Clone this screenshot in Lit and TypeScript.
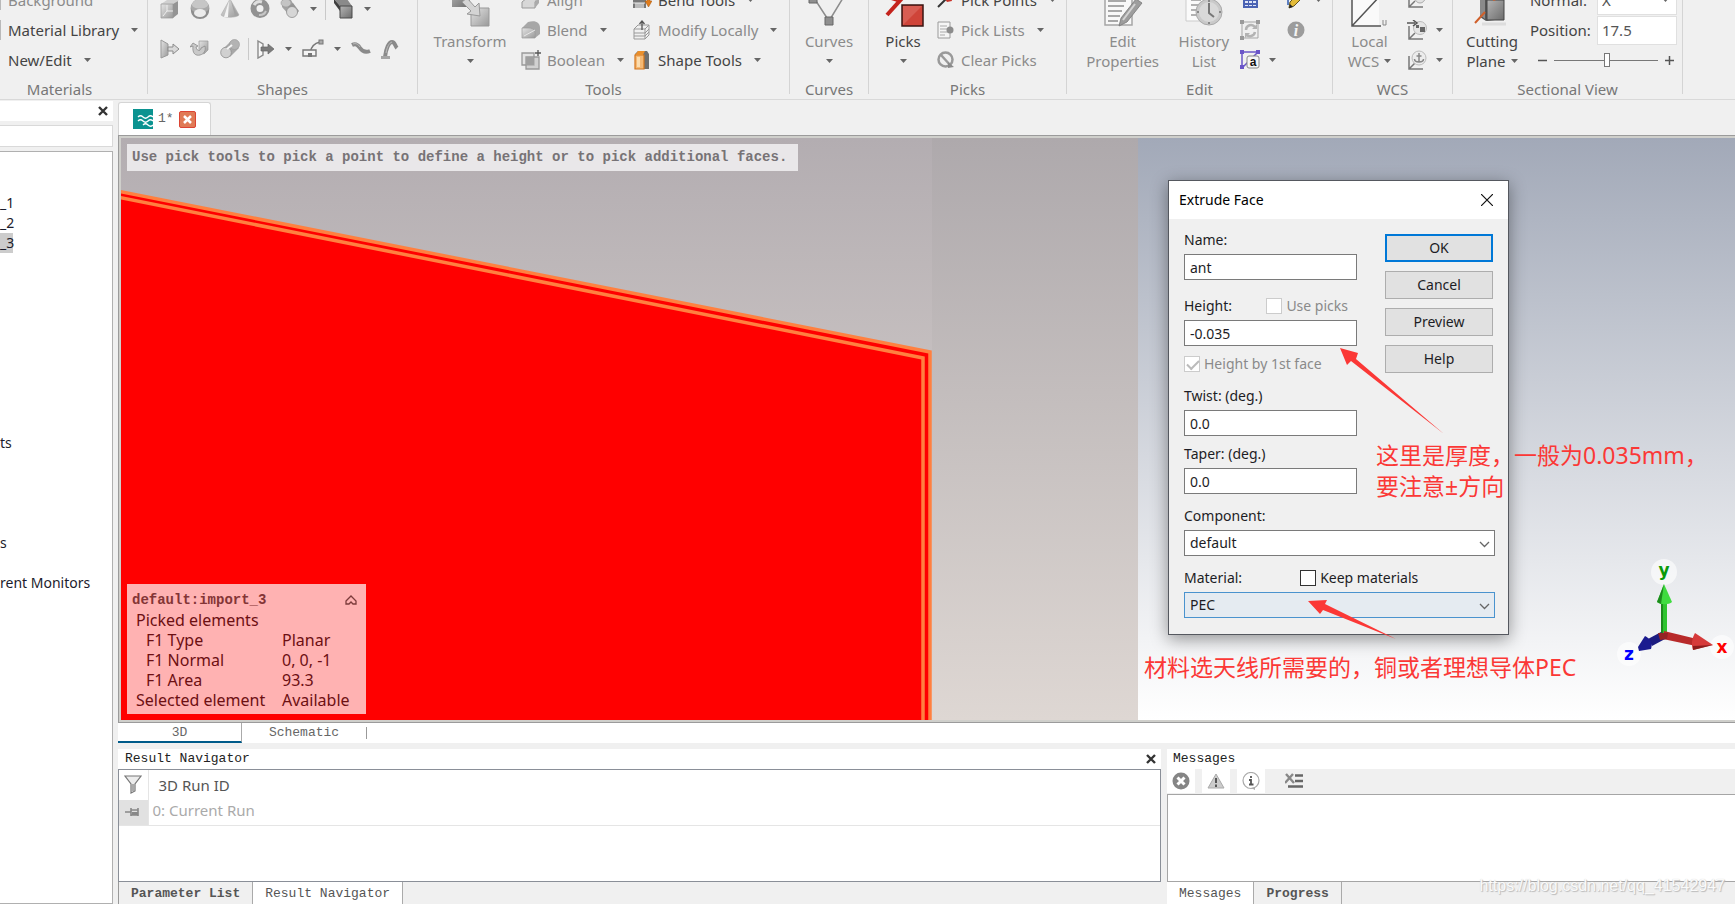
import { LitElement, html, svg, css, nothing } from "lit";
import { customElement, property } from "lit/decorators.js";
import { classMap } from "lit/directives/class-map.js";

const caret = html`<svg class="caret" width="7" height="4" viewBox="0 0 7 4"><path d="M0 0h7L3.500 4z" fill="#666" /></svg>`;

const glyphs: Record<string, { w: number; h: number; d: unknown }> = {
  sliverGrey: { w: 3, h: 20, d: svg`<path d="M0 0h2v20H0z" fill="#b9b9b9"/>` },
  sliverRed: { w: 3, h: 20, d: svg`<ellipse cx="-2" cy="10" rx="3" ry="6" fill="#e3a9a4"/>` },
  cube: { w: 20, h: 20, d: svg`<path d="M1 5l6-4h12l-5 4z" fill="#d0d0d0"/><path d="M1 5h12v14H1z" fill="url(#gA)" stroke="#999" stroke-width=".7"/><path d="M13 5l5-3v13l-5 4z" fill="#949494"/><path d="M3 17l4-5v-6M7 12h6" stroke="#eee" fill="none"/>` },
  sphere: { w: 20, h: 20, d: svg`<circle cx="10" cy="9.500" r="9.500" fill="#a9a9a9"/><path d="M1 9a9 5 0 0 0 18 0v3a9 8 0 0 1-18 0z" fill="#8e8e8e"/><path d="M2 5a9 9 0 0 1 16 0c1 6-17 6-16 0z" fill="#c6c6c6"/><ellipse cx="10" cy="14" rx="6" ry="4" fill="#ececec"/>` },
  cone: { w: 20, h: 20, d: svg`<path d="M10 0l9 16c-3 3-15 3-18 0z" fill="url(#gA)" stroke="#aaa" stroke-width=".6"/><path d="M9 2l-1 16H4z" fill="#f4f4f4"/><path d="M11 2l4 15h3z" fill="#a2a2a2"/>` },
  torus: { w: 20, h: 20, d: svg`<circle cx="10" cy="9.500" r="6.500" fill="none" stroke="#929292" stroke-width="6"/><path d="M4 6a7 7 0 0 1 8-3" stroke="#dedede" stroke-width="3" fill="none"/><path d="M16 12a7 7 0 0 1-7 4" stroke="#c6c6c6" stroke-width="2" fill="none"/>` },
  cyls: { w: 20, h: 20, d: svg`<path d="M2 1h9l5 9-6 7L2 8z" fill="#a3a3a3"/><ellipse cx="6" cy="4" rx="5" ry="4" fill="#c4c4c4" stroke="#999" stroke-width=".6"/><path d="M8 8l5-4 6 8-5 6z" fill="#959595"/><circle cx="12" cy="13" r="5.500" fill="#d6d6d6" stroke="#8f8f8f" stroke-width=".8"/>` },
  extrudeDark: { w: 20, h: 20, d: svg`<path d="M0 0h13l5 7H6z" fill="#8a8a8a"/><path d="M0 0l6 7v5L0 4z" fill="#3f3f3f"/><path d="M6 7h12v12H6z" fill="url(#gB)" stroke="#4a4a4a"/>` },
  rotFace: { w: 20, h: 20, d: svg`<path d="M1 1l7 4v11l-7 3z" fill="url(#gA)" stroke="#999"/><path d="M8 8h5V5l6 5-6 5v-3H8z" fill="#d9d9d9" stroke="#8b8b8b"/>` },
  rotate: { w: 20, h: 20, d: svg`<path d="M9 2h9v9l-4 4-5-3z" fill="url(#gA)" stroke="#999" stroke-width=".7"/><path d="M3 7c-1 8 3 10 7 9 4-1 6-4 5-9l-4 2c0 3-4 4-5-1l2-1-5-3-3 4z" fill="#c9c9c9" stroke="#8c8c8c" stroke-width=".8"/>` },
  loft: { w: 20, h: 20, d: svg`<path d="M2 11l9-9 8 7-9 9z" fill="#a8a8a8"/><circle cx="14.500" cy="5.500" r="5" fill="#b3b3b3" stroke="#999" stroke-width=".6"/><circle cx="6" cy="13.500" r="5.300" fill="#d0d0d0" stroke="#8e8e8e" stroke-width=".8"/><path d="M7 10l5-4" stroke="#f5f5f5" stroke-width="2"/>` },
  extrudeCurve: { w: 18, h: 20, d: svg`<path d="M1 2l5 3v11l-5 3z" fill="#f7f7f7" stroke="#8a8a8a" stroke-width="1.400"/><path d="M4 8h7V5l6 5-6 5v-3H4z" fill="#7b7b7b" stroke="#666" stroke-width=".7"/>` },
  sweep: { w: 22, h: 20, d: svg`<path d="M8 14C9 7 13 4 18 3" fill="none" stroke="#777" stroke-width="1.400"/><path d="M1 11h13v6H1z" fill="#f4f4f4" stroke="#777" stroke-width="1.400"/><path d="M6 14h4v4H6z" fill="#777"/><rect x="17" y="1" width="4" height="4" fill="#aaa" stroke="#777"/>` },
  wave: { w: 20, h: 20, d: svg`<path d="M1 6c4-2 6 0 8 3s5 5 10 3" fill="none" stroke="#8a8a8a" stroke-width="4"/><path d="M2 5c3-1 5 0 7 3" fill="none" stroke="#b9b9b9" stroke-width="1"/>` },
  wire: { w: 18, h: 20, d: svg`<path d="M4 18C5 9 8 3 11 3s3 4 5 6" fill="none" stroke="#8a8a8a" stroke-width="4"/><path d="M0 17h9v3H0z" fill="#a5a5a5"/><path d="M5 14C6 8 8 4 11 3" fill="none" stroke="#bcbcbc"/>` },
  transform: { w: 40, h: 40, d: svg`<path d="M2 3h18v17H2z" fill="url(#gB)"/><path d="M21 21h18v18H21z" fill="url(#gA)" stroke="#999"/><path d="M12 15l5-4 8 9 4-4 1 13-13-2 4-3z" fill="#d4d4d4" stroke="#999"/>` },
  align: { w: 20, h: 20, d: svg`<path d="M5 6l4-4h8l-2 6H4z" fill="#ddd" stroke="#999"/><path d="M1 12l5-4h11l-3 4v6H1z" fill="#d7d7d7" stroke="#999"/><path d="M14 12l4-4v5l-4 5z" fill="#aaa"/>` },
  blend: { w: 20, h: 20, d: svg`<path d="M1 8l6-6c7-2 12 0 12 6v6l-5 4H1z" fill="#a7a7a7"/><path d="M1 8h7c5 0 7 3 6 10H1z" fill="url(#gA)" stroke="#999" stroke-width=".7"/><path d="M3 16l11-6" stroke="#e7e7e7"/>` },
  boolean: { w: 20, h: 20, d: svg`<path d="M1 3h12v12H1z" fill="#e3e3e3" stroke="#999" stroke-width="1.300"/><path d="M5 7h13v12H5z" fill="#bdbdbd" fill-opacity=".6" stroke="#999" stroke-width="1.300"/><path d="M5 7h8v8H5z" fill="#9f9f9f"/><path d="M14 3h6M17 0v6" stroke="#555" stroke-width="1.300"/>` },
  bend: { w: 20, h: 20, d: svg`<path d="M1 8c1-6 11-8 13 0v10H1z" fill="#777"/><path d="M3 13h9v5H3z" fill="#bbb"/><path d="M1 13h12" stroke="#eee"/><path d="M15 4h3v7h2l-3.500 6L13 11h2z" fill="#e07b1a" stroke="#a85a10" stroke-width=".5"/>` },
  modify: { w: 20, h: 20, d: svg`<path d="M2 9l4-4h11v10l-4 4H2z" fill="#f0f0f0" stroke="#999"/><path d="M2 9h11v10M13 9l4-4M2 13h11l4-4M2 16h11l4-4" fill="none" stroke="#999"/><path d="M10 10V1M7.500 4L10 1l2.500 3" fill="none" stroke="#555" stroke-width="1.300"/>` },
  shape: { w: 20, h: 20, d: svg`<path d="M3 4l3-3h9l2 3v15H3z" fill="#6f6f6f"/><path d="M3 5h9v14H3z" fill="#f5b873" stroke="#d2741c" stroke-width="1.200"/><path d="M3 5l3-4h7l-2 4z" fill="#ea8f2c"/><path d="M5 7h3v10H5z" fill="#fbdcae"/>` },
  curves: { w: 44, h: 40, d: svg`<path d="M7 11l15 23L36 11" fill="none" stroke="#8c8c8c" stroke-width="1.500"/><path d="M2 8h8v8H2zM18 30h8v8h-8zM33 6h6v6h-6z" fill="#8f8f8f" stroke="#666"/>` },
  picks: { w: 44, h: 40, d: svg`<path d="M6 28L24 8" stroke="#c4231c" stroke-width="4"/><path d="M7 10l10 3" stroke="#c4231c" stroke-width="4"/><path d="M21 18h21v21H21z" fill="#cf4439" stroke="#3a1512" stroke-width="1.500"/><path d="M22 19h19L22 38z" fill="#d85d53"/>` },
  pickPoint: { w: 18, h: 20, d: svg`<path d="M1 17L9 9" stroke="#333" stroke-width="2"/><path d="M6 6l7-4 2 9-5 1z" fill="#c9342b"/>` },
  pickList: { w: 18, h: 20, d: svg`<path d="M1 2h12v16H1z" fill="#f5f5f5" stroke="#9a9a9a"/><path d="M3 6h7M3 9h7M3 12h7M3 15h5" stroke="#a9a9a9"/><circle cx="13" cy="10" r="3.500" fill="#8c8c8c"/>` },
  clear: { w: 18, h: 20, d: svg`<circle cx="8.500" cy="9.500" r="7" fill="none" stroke="#9a9a9a" stroke-width="2.500"/><path d="M4 5l10 11" stroke="#9a9a9a" stroke-width="2.500"/><path d="M11 12l6 5-6 1z" fill="#8b8b8b"/>` },
  editProps: { w: 40, h: 40, d: svg`<path d="M2 2h27v36H2z" fill="#f8f8f8" stroke="#a5a5a5" stroke-width="1.500"/><path d="M5 14h18M5 19h16M5 24h14M5 29h12M5 34h10" stroke="#8d8d8d" stroke-width="1.500"/><path d="M33 12l6 4-15 19-8 4 2-8z" fill="#9d9d9d" stroke="#777" stroke-width=".8"/><path d="M32 17L20 33" stroke="#d3d3d3" stroke-width="2"/>` },
  history: { w: 40, h: 40, d: svg`<path d="M2 2h26v32H2z" fill="#fafafa" stroke="#ccc"/><path d="M7 13h10M7 18h8M7 23h6M7 28h6" stroke="#999" stroke-width="1.500"/><circle cx="25" cy="25" r="13" fill="#c9c9c9" stroke="#aaa"/><circle cx="25" cy="25" r="10" fill="#d9d9d9"/><path d="M25 16v10l5 4" fill="none" stroke="#777" stroke-width="2"/><path d="M25 13v2M25 35v2M13 25h2M35 25h2" stroke="#888" stroke-width="2"/>` },
  calc: { w: 20, h: 20, d: svg`<path d="M3 1h15v17H3z" fill="#4a62b3"/><path d="M5 7h3v2H5zM9 7h3v2H9zM13 7h3v2h-3zM5 11h3v2H5zM9 11h3v2H9zM13 11h3v2h-3zM5 15h3v1H5zM9 15h3v1H9zM13 15h3v1h-3z" fill="#dfe5f7"/>` },
  refresh: { w: 20, h: 20, d: svg`<path d="M2 2h16v16H2z" fill="none" stroke="#a5a5a5"/><path d="M0 0h4v4H0zM16 0h4v4h-4zM0 16h4v4H0z" fill="#9a9a9a"/><path d="M6 10a5 5 0 0 1 9-3M15 12a5 5 0 0 1-9 2" fill="none" stroke="#b3b3b3" stroke-width="2.500"/><path d="M17 4v5h-5zM5 18v-5h5z" fill="#b3b3b3"/>` },
  param: { w: 20, h: 20, d: svg`<path d="M2 18V2h16L3 17" fill="none" stroke="#6a55c8" stroke-width="1.500"/><path d="M0 0h4v4H0zM16 0h4v4h-4zM0 15h4v4H0z" fill="#6a55c8"/><rect x="7" y="6" width="12" height="12" rx="2" fill="#f5f5f5" stroke="#888"/><text x="13" y="16" text-anchor="middle" font-family="Liberation Sans" font-weight="700" font-size="12" fill="#111">a</text>` },
  pencil: { w: 20, h: 20, d: svg`<path d="M2 3h4M2 15V4" stroke="#5d7fc0" stroke-width="2"/><path d="M15 1l4 4-11 11-5 2 1-6z" fill="#e3bb37" stroke="#5f5320"/><path d="M3 18l1-4 3 3z" fill="#222"/>` },
  info: { w: 20, h: 20, d: svg`<circle cx="10" cy="10" r="8.500" fill="#9c9c9c"/><text x="10" y="16" text-anchor="middle" font-family="Liberation Serif" font-style="italic" font-weight="700" font-size="16" fill="#f3f3f3">i</text>` },
  wcs: { w: 40, h: 40, d: svg`<path d="M3 5h27v33H3z" fill="#fafafa"/><path d="M3 4v35h29M3 39L31 9" fill="none" stroke="#555" stroke-width="1.500"/><path d="M34 33v5h3v-5" fill="none" stroke="#888"/>` },
  wcsA: { w: 20, h: 20, d: svg`<path d="M2 2v15h14M2 17l6-6" fill="none" stroke="#777" stroke-width="1.500"/><circle cx="13" cy="8" r="5" fill="#e2e2e2" stroke="#aaa"/><path d="M10 9h6" stroke="#777" stroke-width="2"/>` },
  wcsB: { w: 20, h: 20, d: svg`<path d="M2 6v13h14M2 19l6-6" fill="none" stroke="#777" stroke-width="1.500"/><circle cx="13" cy="8" r="6.500" fill="#e5e5e5" stroke="#bbb"/><path d="M0 3h8M6 0l4 3-4 3" fill="none" stroke="#555" stroke-width="1.500"/><path d="M13 7h5v5h-5zM9 5h3v3H9z" fill="#666"/>` },
  wcsC: { w: 20, h: 20, d: svg`<path d="M2 6v13h14M2 19l6-6" fill="none" stroke="#777" stroke-width="1.500"/><circle cx="12" cy="8" r="7" fill="#ececec" stroke="#bbb"/><path d="M12 3v9M9.500 6h5M7.500 9c0 4 9 4 9 0" fill="none" stroke="#888" stroke-width="1.500"/>` },
  cutting: { w: 36, h: 40, d: svg`<path d="M6 4h24v28l-18 2-6-4z" fill="#555"/><path d="M6 6l5 4v22l-5-4z" fill="#8a8a8a"/><path d="M13 13h17v20H13z" fill="url(#gB)" stroke="#444"/><path d="M1 36l10-11M19 13l9-3" stroke="#d0602b" stroke-width="2"/><path d="M8 37h24" stroke="#ddd" stroke-width="3"/>` },
  logo: { w: 20, h: 20, d: svg`<path d="M0 0h20v20H0z" fill="#0b9390"/><path d="M5 8q2.500-2.500 5 0t5 0 5 0M5 12q2.500-2.500 5 0t5 0 5 0M10 16q2.500-2.500 5 0t5 0" fill="none" stroke="#fff" stroke-width="1.300"/>` },
  closeX: { w: 10, h: 10, d: svg`<path d="M1 1l8 8M9 1L1 9" stroke="#333" stroke-width="2.400"/>` },
  closeWhite: { w: 9, h: 9, d: svg`<path d="M1 1l7 7M8 1L1 8" stroke="#fff" stroke-width="2.500"/>` },
  closeThin: { w: 12, h: 12, d: svg`<path d="M0 0l12 12M12 0L0 12" stroke="#111" stroke-width="1.200"/>` },
  funnel: { w: 18, h: 20, d: svg`<path d="M1 1h16l-6 8v7l-4 2V9z" fill="#ececec" stroke="#777" stroke-width="1.200"/><path d="M9 9v7" stroke="#aaa" stroke-width="2"/>` },
  pin: { w: 16, h: 12, d: svg`<path d="M0 6h6M6 2v8M6 4h7M6 9h7M13 2v8" fill="none" stroke="#888" stroke-width="1.600"/><path d="M7 6h6v3H7z" fill="#888"/>` },
  chevUp: { w: 12, h: 10, d: svg`<path d="M1 6l5-5 5 5v3H8L6 7 4 9H1z" fill="none" stroke="#7c3b3b" stroke-width="1.300"/>` },
  error: { w: 18, h: 18, d: svg`<circle cx="9" cy="9" r="8.500" fill="#858585"/><path d="M5.500 5.500l7 7M12.500 5.500l-7 7" stroke="#fff" stroke-width="3"/>` },
  warn: { w: 18, h: 18, d: svg`<path d="M9 2l8 14H1z" fill="#ccc" stroke="#aaa"/><path d="M9 6v5M9 12.500V15" stroke="#555" stroke-width="2"/>` },
  note: { w: 18, h: 18, d: svg`<circle cx="9" cy="8.500" r="8" fill="#fff" stroke="#aaa" stroke-width="1.200"/><path d="M9 4v2M7 8h2v4M7 12.500h4.500" fill="none" stroke="#555" stroke-width="1.800"/><path d="M9 16l4 2v-3z" fill="#aaa"/>` },
  clearList: { w: 18, h: 16, d: svg`<path d="M1 1l8 9M8 1L0 10" stroke="#888" stroke-width="2.400"/><path d="M10 2.500h8M10 8h8M3 13.500h15" stroke="#666" stroke-width="2.600"/>` },
};

const icon = (name: string) => {
  const g = glyphs[name];
  return html`<svg class="ic" width=${g.w} height=${g.h} viewBox="0 0 ${g.w} ${g.h}" aria-hidden="true">
    <defs>
      <linearGradient id="gA" x1="0" y1="0" x2="1" y2="1"><stop offset="0" stop-color="#e4e4e4" /><stop offset="1" stop-color="#999" /></linearGradient>
      <linearGradient id="gB" x1="0" y1="0" x2="1" y2="1"><stop offset="0" stop-color="#b5b5b5" /><stop offset="1" stop-color="#6c6c6c" /></linearGradient>
    </defs>
    ${g.d}
  </svg>`;
};

const resets = css`
  * { box-sizing: border-box; }
  button { font: inherit; color: inherit; background: none; border: 0; padding: 0; margin: 0; }
  svg { display: block; flex: none; }
`;

@customElement("cst-ribbon")
class CstRibbon extends LitElement {
  static styles = [resets, css`
    :host { display: flex; height: 100px; padding-bottom: 5px; border-bottom: 1px solid #d9d9d9; background: #f0f0f0; overflow: hidden; font: 15px/20px "Noto Sans", sans-serif; color: #444; }
    .group { flex: none; display: flex; flex-direction: column; justify-content: flex-end; border-right: 1px solid #d4d4d4; }
    .body { display: flex; height: 90px; flex: none; margin-bottom: 5px; }
    .label { height: 14px; flex: none; line-height: 18px; text-align: center; color: #777; }
    .col { display: flex; flex-direction: column; }
    .item { display: flex; align-items: center; height: 30px; gap: 6px; white-space: nowrap; }
    .item .caret { margin-left: 6px; }
    .off { color: #8b8b8b; }
    .big { display: flex; flex-direction: column; align-items: center; justify-content: flex-end; height: 86px; line-height: 20px; }
    .big .ic { margin-bottom: 4px; }
    .line { height: 20px; display: flex; align-items: center; gap: 5px; }
    .strip { display: flex; align-items: center; height: 40px; gap: 10px; }
    .bar { width: 1px; height: 22px; margin: 0 -2px; background: #c9c9c9; }
    .materials { width: 176px; margin-left: -28px; }
    .materials .body { padding-left: 27px; }
    .shapes { width: 270px; }
    .shapes .body { flex-direction: column; padding: 4px 0 6px 12px; }
    .tools { width: 372px; }
    .tools .body { padding-left: 15px; }
    .tools .big { width: 74px; margin-right: 14px; }
    .tools .col { width: 111px; }
    .curves { width: 79px; }
    .curves .body, .wcs .body { justify-content: center; }
    .picks { width: 198px; }
    .picks .body { padding-left: 12px; gap: 12px; }
    .edit { width: 266px; }
    .edit .body { padding-left: 19px; }
    .edit .big { width: 80px; }
    .edit .big + .big { margin-left: 8px; }
    .edit .col { width: 50px; }
    .edit .item .caret { margin-left: 3px; }
    .wcs { width: 120px; }
    .wcs .body { gap: 16px; padding-left: 6px; }
    .wcs .item .caret { margin-left: 3px; }
    .section { width: 230px; }
    .section .body { padding-left: 13px; gap: 12px; }
    .section .item { width: 147px; justify-content: space-between; gap: 4px; }
    .box { width: 80px; height: 29px; border: 1px solid #e0e0e0; background: #fff; padding: 0 4px; font: inherit; color: #555; appearance: none; border-radius: 0; outline: 0; }
    .pick { position: relative; display: flex; }
    .pick .caret { position: absolute; right: 8px; top: 12px; }
    .slide { padding: 0 3px 0 8px; }
    input[type="range"] { appearance: none; width: 104px; height: 14px; margin: 0; background: linear-gradient(#777, #777) center / 100% 1px no-repeat; }
    input[type="range"]::-webkit-slider-thumb { appearance: none; width: 6px; height: 14px; background: #fff; border: 1px solid #777; border-radius: 0; }
    .step { width: 9px; height: 20px; display: grid; place-items: center; }
  `];

  item(ic: string, text = "", off = true, drop = true) {
    return html`<button class=${classMap({ item: true, off })}>${icon(ic)}${text ? html`<span>${text}</span>` : nothing}${drop ? caret : nothing}</button>`;
  }
  big(ic: string, first: string, second = "", off = true, drop = true) {
    return html`<button class=${classMap({ big: true, off })}>${icon(ic)}<span class="line">${first}</span><span class="line">${second}${drop ? caret : nothing}</span></button>`;
  }
  group(name: string, label: string, body: unknown) {
    return html`<section class="group ${name}"><div class="body">${body}</div><div class="label">${label}</div></section>`;
  }
  tool(ic: string) {
    return html`<button aria-label=${ic}>${icon(ic)}</button>`;
  }

  render() {
    const bar = html`<span class="bar"></span>`;
    return html`
      ${this.group("materials", "Materials", html`<div class="col">
        ${this.item("sliverGrey", "Background", true, false)}${this.item("sliverGrey", "Material Library", false)}${this.item("sliverRed", "New/Edit", false)}</div>`)}
      ${this.group("shapes", "Shapes", html`
        <div class="strip">${["cube", "sphere", "cone", "torus", "cyls"].map((n) => this.tool(n))}${caret}${bar}${this.tool("extrudeDark")}${caret}</div>
        <div class="strip">${["rotFace", "rotate", "loft"].map((n) => this.tool(n))}${bar}${this.tool("extrudeCurve")}${caret}${this.tool("sweep")}${caret}${this.tool("wave")}${this.tool("wire")}</div>`)}
      ${this.group("tools", "Tools", html`${this.big("transform", "Transform")}
        <div class="col">${this.item("align", "Align", true, false)}${this.item("blend", "Blend")}${this.item("boolean", "Boolean")}</div>
        <div class="col">${this.item("bend", "Bend Tools", false)}${this.item("modify", "Modify Locally")}${this.item("shape", "Shape Tools", false)}</div>`)}
      ${this.group("curves", "Curves", this.big("curves", "Curves"))}
      ${this.group("picks", "Picks", html`${this.big("picks", "Picks", "", false)}
        <div class="col">${this.item("pickPoint", "Pick Points", false)}${this.item("pickList", "Pick Lists")}${this.item("clear", "Clear Picks", true, false)}</div>`)}
      ${this.group("edit", "Edit", html`${this.big("editProps", "Edit", "Properties", true, false)}${this.big("history", "History", "List", true, false)}
        <div class="col">${this.item("calc", "", true, false)}${this.item("refresh", "", true, false)}${this.item("param")}</div>
        <div class="col">${this.item("pencil")}${this.item("info", "", true, false)}</div>`)}
      ${this.group("wcs", "WCS", html`${this.big("wcs", "Local", "WCS")}
        <div class="col">${this.item("wcsA", "", true, false)}${this.item("wcsB")}${this.item("wcsC")}</div>`)}
      ${this.group("section", "Sectional View", html`${this.big("cutting", "Cutting", "Plane", false)}
        <div class="col">
          <div class="item"><label for="normal">Normal:</label><span class="pick"><select id="normal" class="box"><option>X</option></select>${caret}</span></div>
          <div class="item"><label for="position">Position:</label><input id="position" class="box" value="17.5" /></div>
          <div class="item slide"><button class="step" aria-label="Decrease"><svg width="9" height="9"><path d="M0 4.500h9" stroke="#555" stroke-width="1.500" /></svg></button>
            <input type="range" aria-label="Position" min="0" max="100" value="51" />
            <button class="step" aria-label="Increase"><svg width="9" height="9"><path d="M0 4.500h9M4.500 0v9" stroke="#555" stroke-width="1.500" /></svg></button></div>
        </div>`)}
    `;
  }
}

@customElement("cst-tree")
class CstTree extends LitElement {
  static styles = [resets, css`
    :host { display: flex; flex-direction: column; background: #f0f0f0; font: 14px/20px "Noto Sans", sans-serif; color: #1c1c2c; }
    .title { height: 20px; margin-top: 1px; background: #fff; display: flex; align-items: center; justify-content: flex-end; padding-right: 5px; }
    .search { height: 22px; margin: 4px 0; border: 1px solid #d9d9d9; border-left: 0; width: 100%; background: #fff; outline: 0; }
    ul { flex: 1; margin: 0; padding: 1px 0 0; list-style: none; background: #fff; border: 1px solid #b0b0b0; border-left: 0; }
    li { height: 20px; white-space: nowrap; }
    .sel { background: #ccc; width: 13px; }
  `];
  render() {
    const rows: Record<number, string> = { 2: "_1", 3: "_2", 4: "_3", 14: "ts", 19: "s", 21: "rent Monitors" };
    return html`<div class="title"><button aria-label="Close">${icon("closeX")}</button></div>
      <input class="search" aria-label="Search" />
      <ul>${Array.from({ length: 22 }, (_, i) => html`<li class=${classMap({ sel: i === 4 })}>${rows[i] ?? nothing}</li>`)}</ul>`;
  }
}

@customElement("extrude-dialog")
class ExtrudeDialog extends LitElement {
  static styles = [resets, css`
    :host { display: block; width: 341px; background: #f0f0f0; border: 1px solid #55585f; box-shadow: 0 4px 16px rgba(0, 0, 0, 0.4); font: 14px/20px "Noto Sans", sans-serif; color: #1d1d25; }
    header { height: 38px; background: #fff; display: flex; align-items: center; justify-content: space-between; padding: 0 15px 0 10px; color: #000; }
    form { display: grid; grid-template-columns: 173px 108px; column-gap: 28px; padding: 11px 13px 16px 15px; }
    .field { display: flex; flex-direction: column; gap: 4px; }
    .near { margin-top: 8px; }
    .mid { margin-top: 12px; }
    .far { margin-top: 16px; }
    .wide { grid-column: 1 / -1; margin-right: -2px; }
    .cap { display: flex; }
    .cap .check { margin-left: auto; }
    .cap.keep { gap: 58px; }
    .cap.keep .check { margin-left: 0; }
    .text, select { font: inherit; color: inherit; height: 26px; width: 100%; border: 1px solid #7a7a7a; background: #fff; padding: 0 5px; outline: 0; border-radius: 0; appearance: none; }
    .check { display: flex; align-items: center; gap: 4px; }
    .check input { appearance: none; width: 16px; height: 16px; margin: 0; border: 1px solid #333; background: #fff; }
    .dim { color: #8a8a8a; padding-right: 9px; }
    .dim input { border-color: #ccc; }
    .check input:checked { position: relative; }
    .check input:checked::after { content: ""; position: absolute; left: 2px; top: 3px; width: 10px; height: 5px; border: solid #bbb; border-width: 0 0 2px 2px; rotate: -45deg; }
    .combo { position: relative; }
    .combo svg { position: absolute; right: 5px; top: 11px; }
    .hot select { background: #e5ebf1; border-color: #4a93ce; }
    .buttons { display: flex; flex-direction: column; gap: 9px; padding-top: 4px; }
    .push { height: 28px; background: #e1e1e1; border: 1px solid #adadad; }
    .ok { border: 2px solid #0078d7; }
  `];
  field(id: string, label: string, value: string, cls = "", extra: unknown = nothing) {
    return html`<div class="field ${cls}"><div class="cap"><label for=${id}>${label}</label>${extra}</div><input class="text" id=${id} .value=${value} /></div>`;
  }
  combo(id: string, value: string) {
    return html`<select id=${id}><option>${value}</option></select>
      <svg width="11" height="7"><path d="M1 1l4.500 4.500L10 1" fill="none" stroke="#666" stroke-width="1.300" /></svg>`;
  }
  render() {
    return html`<header><span>Extrude Face</span><button aria-label="Close">${icon("closeThin")}</button></header>
      <form @submit=${(e: Event) => e.preventDefault()}>
        <div>
          ${this.field("name", "Name:", "ant")}
          ${this.field("height", "Height:", "-0.035", "far", html`<label class="check dim"><input type="checkbox" disabled />Use picks</label>`)}
          <label class="check dim near"><input type="checkbox" checked disabled />Height by 1st face</label>
          ${this.field("twist", "Twist: (deg.)", "0.0", "mid")}
          ${this.field("taper", "Taper: (deg.)", "0.0", "near")}
        </div>
        <div class="buttons">
          <button class="push ok">OK</button><button class="push" type="button">Cancel</button>
          <button class="push" type="button">Preview</button><button class="push" type="button">Help</button>
        </div>
        <div class="field wide mid"><label for="component">Component:</label><div class="combo">${this.combo("component", "default")}</div></div>
        <div class="field wide mid"><div class="cap keep"><label for="material">Material:</label><label class="check"><input type="checkbox" />Keep materials</label></div>
          <div class="combo hot">${this.combo("material", "PEC")}</div></div>
      </form>`;
  }
}

@customElement("cst-viewport")
class CstViewport extends LitElement {
  static styles = [resets, css`
    :host { display: block; position: relative; border: solid #9b9b9b; border-width: 1px 0 1px 1px; background: #cfcfcb; font-family: "Noto Sans", sans-serif; }
    .scene { position: absolute; inset: 2px 0 2px 2px; width: calc(100% - 2px); height: calc(100% - 4px); }
    .hint, .info, .axes, .arrows, .note, extrude-dialog { position: absolute; }
    .hint { left: 8px; top: 8px; padding: 0 11px 0 5px; font: bold 14px/27px "Liberation Mono", monospace; color: #777376; background: #e9e7e9; white-space: nowrap; }
    .info { left: 8px; bottom: 8px; width: 239px; padding: 5px 5px 4px; background: #ffb2b2; color: #6d0f12; font-size: 16px; line-height: 20px; }
    .head { display: flex; justify-content: space-between; align-items: center; padding-right: 4px; height: 21px; font: bold 14px/20px "Liberation Mono", monospace; color: #843536; }
    dl { display: grid; grid-template-columns: 146px 1fr; margin: 0; padding-left: 4px; }
    dt.in { padding-left: 10px; }
    dd { margin: 0; white-space: nowrap; }
    dt { white-space: nowrap; }
    .axes { right: 0; bottom: 52px; }
    extrude-dialog { left: 1049px; top: 44px; }
    .arrows { left: 1180px; top: 200px; }
    .note { font: 23px/31px "Noto Sans", "Noto Sans CJK SC", sans-serif; color: #fb3836; white-space: pre; }
    .one { left: 1257px; top: 304px; }
    .two { left: 1025px; top: 516px; }
  `];
  render() {
    return html`
      <svg class="scene">
        <defs>
          <linearGradient id="s" x1="0" y1="0" x2="0" y2="1"><stop offset="0" stop-color="#a2a9b8" /><stop offset="1" stop-color="#fff" /></linearGradient>
          <linearGradient id="a" x1="0" y1="0" x2="0" y2="1"><stop offset="0" stop-color="#b3adb1" /><stop offset="1" stop-color="#e2dbd6" /></linearGradient>
          <linearGradient id="b" x1="0" y1="0" x2="0" y2="1"><stop offset="0" stop-color="#aea9ac" /><stop offset="1" stop-color="#ded7d3" /></linearGradient>
        </defs>
        <rect width="100%" height="100%" fill="url(#s)" />
        <rect width="811" height="100%" fill="url(#a)" />
        <rect x="811" width="206" height="100%" fill="url(#b)" />
        <path d="M0 54L809 214V700H0z" fill="#f00" />
        <path d="M-4 53L809 214V700M-4 59L802 220V700" fill="none" stroke="#ff8040" stroke-width="3.500" />
      </svg>
      <div class="hint">Use pick tools to pick a point to define a height or to pick additional faces.</div>
      <div class="info">
        <div class="head">default:import_3 ${icon("chevUp")}</div>
        <dl><dt>Picked elements</dt><dd></dd><dt class="in">F1 Type</dt><dd>Planar</dd><dt class="in">F1 Normal</dt><dd>0, 0, -1</dd>
          <dt class="in">F1 Area</dt><dd>93.3</dd><dt>Selected element</dt><dd>Available</dd></dl>
      </div>
      <svg class="axes" width="120" height="120" viewBox="0 0 120 120" font-family="DejaVu Sans" font-weight="700" font-size="17" text-anchor="middle">
        <g fill="#fff" fill-opacity=".6"><circle cx="49" cy="22" r="13" /><circle cx="107" cy="97" r="12" /><circle cx="14" cy="104" r="12" /></g>
        <path d="M46 48h6v37h-6z" fill="#2fc52f" /><path d="M46 48h2v37h-2z" fill="#1d8a1d" /><path d="M49 34l8 18c-3 3-12 3-15 0z" fill="#3fdc3f" /><path d="M49 34l-7 18 4 2z" fill="#1d8a1d" />
        <path d="M49 81l33 8-1 7-33-7z" fill="#b82a2a" /><path d="M80 83l18 12-20 5c-2-5-1-12 2-17z" fill="#d63a3a" /><path d="M98 95l-20 5v-4z" fill="#8c1c1c" />
        <path d="M46 82l4 7-13 7-4-7z" fill="#1c1c80" /><path d="M30 86c5 2 8 8 6 13l-12 2-1-4z" fill="#1b1b8f" /><path d="M43 83l10 0-1 6-7 1z" fill="#952424" />
        <text x="49" y="26" fill="#0a9a0a">y</text><text x="107" y="103" fill="#f00">x</text><text x="14" y="110" fill="#00f">z</text>
      </svg>
      <extrude-dialog></extrude-dialog>
      <div class="note one">这里是厚度，一般为0.035mm，
要注意±方向</div>
      <div class="note two">材料选天线所需要的，铜或者理想导体PEC</div>
      <svg class="arrows" width="110" height="310" viewBox="1299 336 110 310" overflow="visible" fill="#fb3836">
        <path d="M1340 348l18 5-2 6 88 75-93-73-4 4z" /><path d="M1308 601l19-1-2 4 71 35-73-29-3 4z" />
      </svg>`;
  }
}

@customElement("cst-dock")
class CstDock extends LitElement {
  @property() kind = "results";
  static styles = [resets, css`
    :host { display: flex; flex-direction: column; min-width: 0; font: 13px/20px "Liberation Mono", monospace; color: #222; }
    .title { height: 20px; line-height: 22px; flex: none; background: #fff; display: flex; align-items: center; justify-content: space-between; padding: 0 5px 0 7px; }
    .title.msg { padding-left: 6px; }
    .pane { flex: 1; border: 1px solid #8a8f98; background: #fff; }
    .pane.msg { border: 1px solid #a5a5a5; border-right: 0; }
    table { width: 100%; border-collapse: collapse; font: 15px/20px "Noto Sans", sans-serif; color: #555; text-align: left; }
    th, td { padding: 0; font-weight: 400; }
    th { height: 30px; }
    td { height: 25px; border-bottom: 1px solid #e5e5e5; color: #aaa; padding: 0 0 4px 4px; }
    .k { width: 29px; border-right: 1px solid #e5e5e5; padding: 0; }
    .k svg { margin: 0 auto; }
    td.k { background: #e1e1e1; }
    th.n { padding-left: 10px; }
    .tools { display: flex; gap: 7px; height: 25px; flex: none; }
    .tools button { width: 28px; height: 24px; display: grid; place-items: center; background: #fff; }
    .tools .plain { background: none; margin-left: 8px; }
    .tabs { display: flex; height: 22px; flex: none; line-height: 24px; color: #555; }
    .tab { padding: 0 12px; border-right: 1px solid #aaa; }
    .bold { font-weight: 700; }
    .on { background: #fff; }
    .edge { border-left: 1px solid #999; }
  `];
  render() {
    return this.kind === "results"
      ? html`<div class="title"><span>Result Navigator</span><button aria-label="Close">${icon("closeX")}</button></div>
        <div class="pane"><table>
          <tr><th class="k">${icon("funnel")}</th><th class="n">3D Run ID</th></tr>
          <tr><td class="k">${icon("pin")}</td><td>0: Current Run</td></tr></table></div>
        <div class="tabs"><button class="tab bold edge">Parameter List</button><button class="tab on">Result Navigator</button></div>`
      : html`<div class="title msg"><span>Messages</span></div>
        <div class="tools">${["error", "warn", "note"].map((n) => html`<button aria-label=${n}>${icon(n)}</button>`)}<button class="plain" aria-label="Clear">${icon("clearList")}</button></div>
        <div class="pane msg"></div>
        <div class="tabs"><button class="tab on">Messages</button><button class="tab bold">Progress</button></div>`;
  }
}

@customElement("app-root")
class AppRoot extends LitElement {
  static styles = [resets, css`
    :host { display: flex; flex-direction: column; height: 100vh; overflow: hidden; position: relative; background: #f0f0f0; }
    .work { flex: 1; min-height: 0; display: grid; grid-template-columns: 113px minmax(0, 1fr); column-gap: 5px; }
    main { display: flex; flex-direction: column; min-width: 0; }
    .files { height: 35px; flex: none; display: flex; align-items: flex-end; }
    .file { height: 33px; width: 93px; padding-left: 14px; background: #fff; border: 1px solid #d5d5d5; border-bottom: 0; border-radius: 3px 3px 0 0; display: flex; align-items: center; gap: 5px; font: 13px/20px "Liberation Mono", monospace; color: #666; }
    .kill { width: 17px; height: 17px; border: 1px solid #dc4433; border-radius: 2px; background: #e07a55; display: grid; place-items: center; }
    cst-viewport { flex: 1; min-height: 0; }
    .views { height: 20px; flex: none; display: flex; background: #fff; font: 13px/20px "Liberation Mono", monospace; color: #666; }
    .view { width: 124px; }
    .view.on { border-right: 1px solid #aaa; border-bottom: 2px solid #005b8a; }
    .mark { width: 1px; height: 12px; margin-top: 4px; background: #999; }
    .docks { display: grid; grid-template-columns: minmax(0, 1043fr) minmax(0, 568fr); column-gap: 6px; height: 155px; margin-top: 6px; flex: none; }
    .water { position: absolute; right: 10px; bottom: 7px; font: 16px/22px "Liberation Sans", sans-serif; color: #fafafa; text-shadow: 1px 1px 1px #bbb, 0 0 1px #ccc; }
  `];
  render() {
    return html`<cst-ribbon></cst-ribbon>
      <div class="work">
        <cst-tree></cst-tree>
        <main>
          <div class="files"><div class="file">${icon("logo")}<span>1*</span><button class="kill" aria-label="Close file">${icon("closeWhite")}</button></div></div>
          <cst-viewport></cst-viewport>
          <div class="views"><button class="view on">3D</button><button class="view">Schematic</button><span class="mark"></span></div>
          <div class="docks"><cst-dock kind="results"></cst-dock><cst-dock kind="messages"></cst-dock></div>
        </main>
      </div>
      <div class="water">https://blog.csdn.net/qq_41542947</div>`;
  }
}
